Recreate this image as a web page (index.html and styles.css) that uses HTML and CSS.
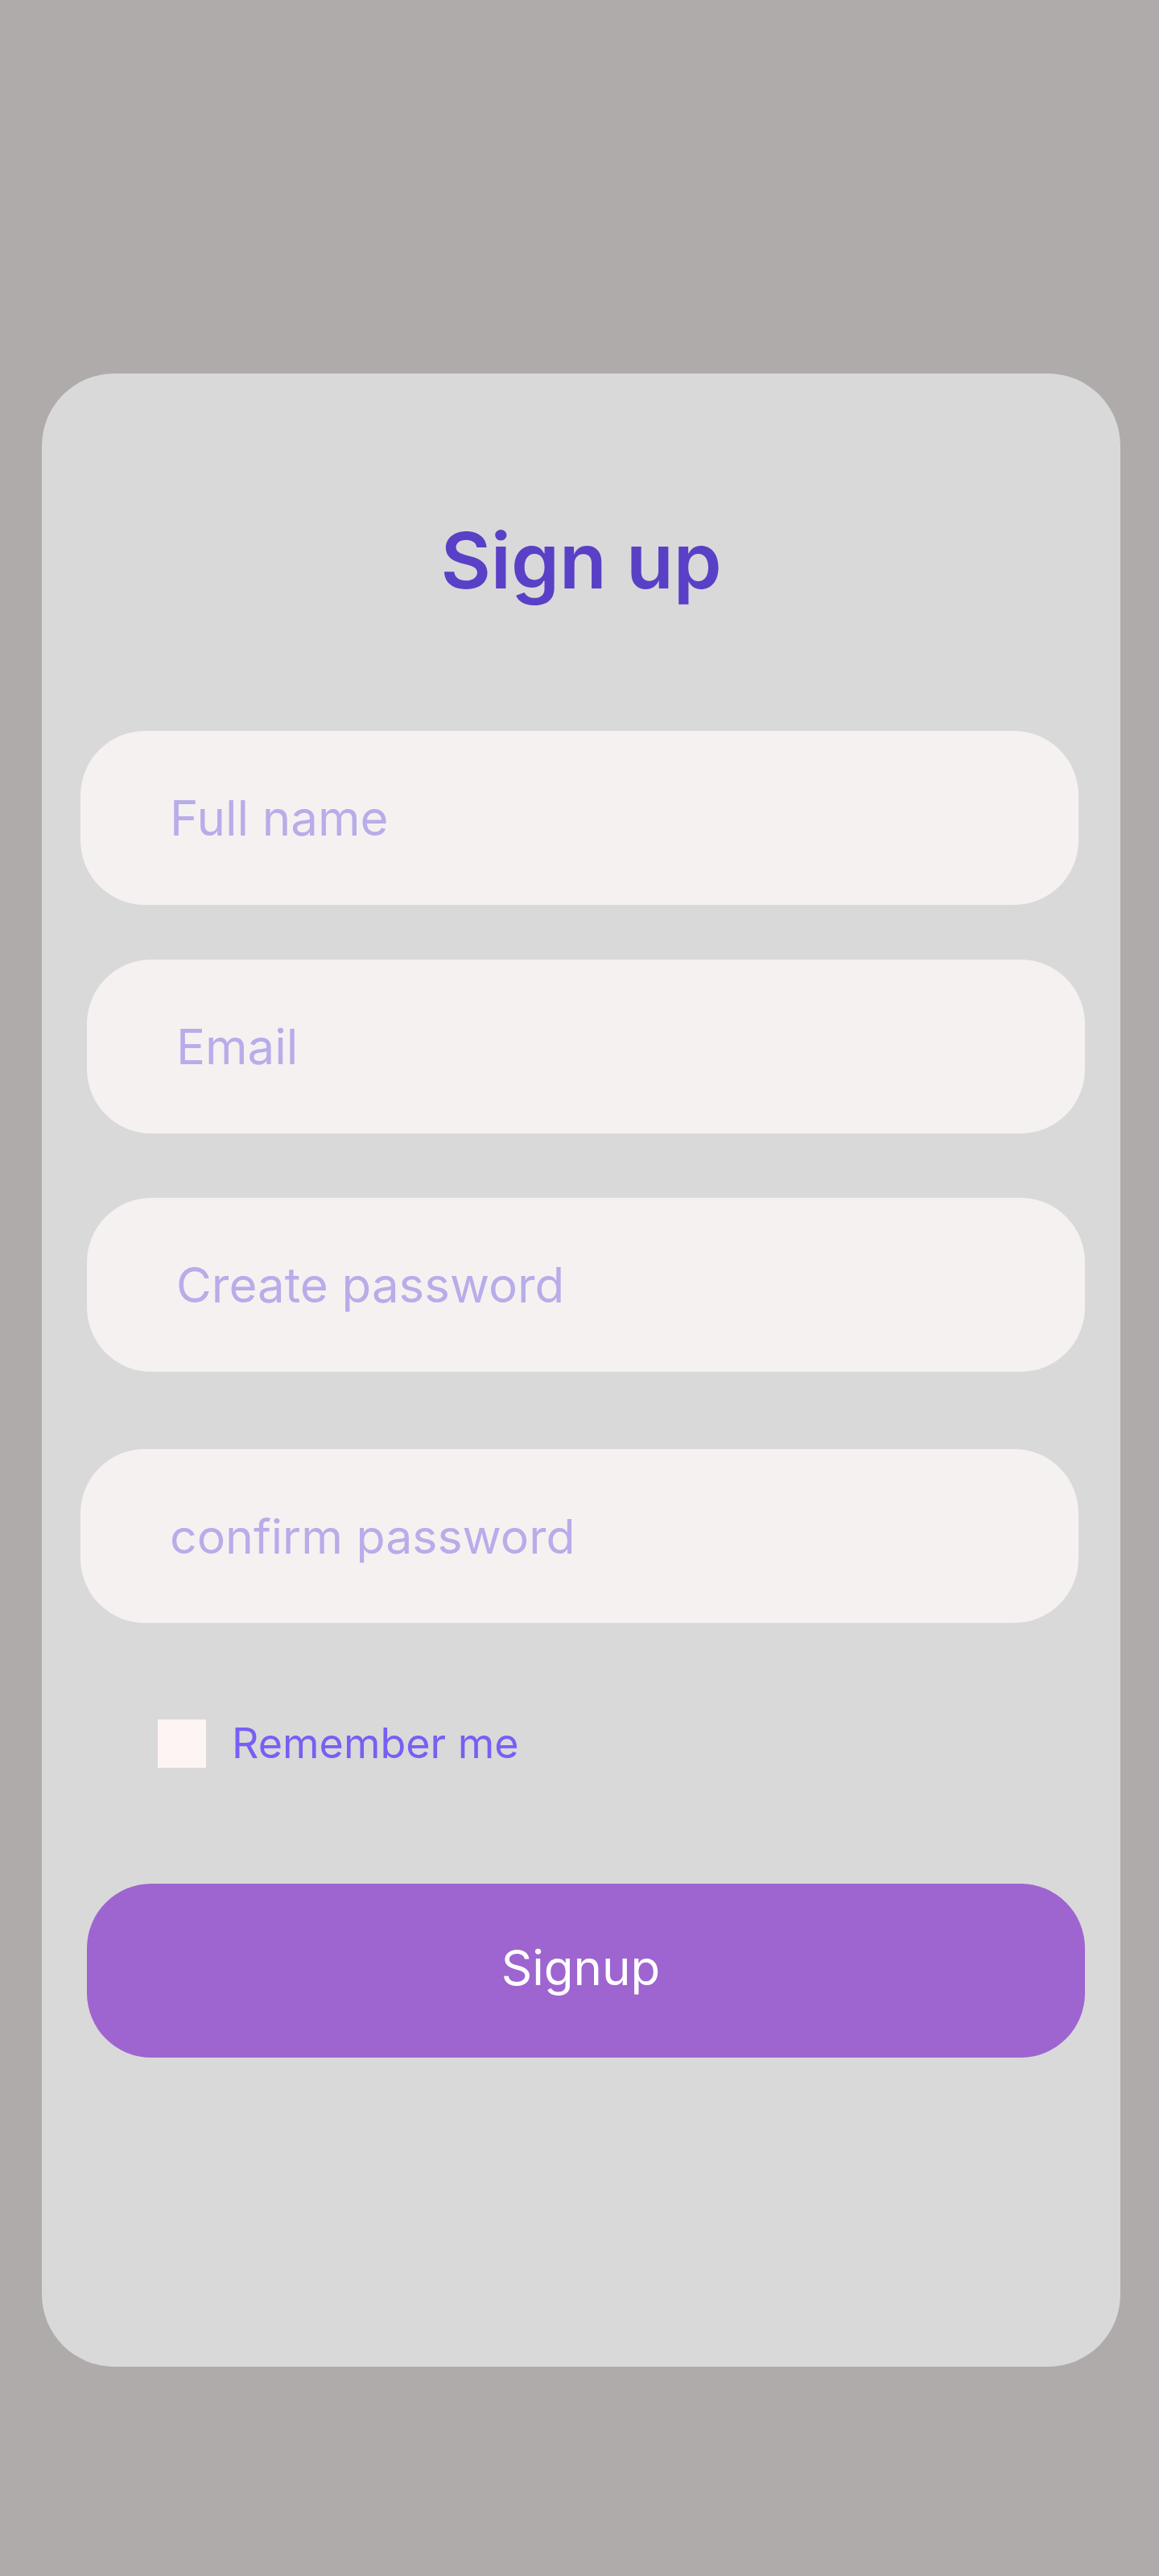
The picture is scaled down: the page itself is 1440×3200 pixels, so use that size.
FILE: index.html
```html
<!DOCTYPE html>
<html lang="en">
<head>
<meta charset="utf-8">
<title>Sign up</title>
<link rel="stylesheet" href="styles.css">
</head>
<body>
<main class="page">
  <form class="card">
    <h1 class="title">Sign up</h1>
    <input class="field field-a f1" type="text" placeholder="Full name">
    <input class="field field-b f2" type="email" placeholder="Email">
    <input class="field field-b f3" type="password" placeholder="Create password">
    <input class="field field-a f4" type="password" placeholder="confirm password">
    <label class="remember">
      <input class="check" type="checkbox">
      <span class="remember-text">Remember me</span>
    </label>
    <button class="submit" type="button">Signup</button>
  </form>
</main>
</body>
</html>
```
FILE: styles.css
```css
* { box-sizing: border-box; }
html, body {
  margin: 0;
  padding: 0;
  background: #b0abab;
  font-family: "Inter", "Noto Sans", sans-serif;
}
.page {
  width: 1440px;
  height: 3200px;
  padding-top: 464px;
  padding-left: 52px;
}
.card {
  width: 1340px;
  height: 2476px;
  background: #d9d9d9;
  border-radius: 90px;
  padding-top: 172px;
  display: flex;
  flex-direction: column;
  align-items: flex-start;
}
.title {
  margin: 0 0 1px 0;
  align-self: stretch;
  text-align: center;
  font-size: 96px;
  line-height: 120px;
  font-weight: 600;
  color: #5940c6;
}
.field {
  display: block;
  width: 1240px;
  height: 216px;
  border: none;
  outline: none;
  border-radius: 80px;
  background: #f6f1f1;
  padding: 0 0 0 111px;
  font-family: "Inter", "Noto Sans", sans-serif;
  font-size: 60px;
  color: #5940c6;
}
.field::placeholder { color: #b8ace9; opacity: 1; }
.field-a { margin-left: 48px; }
.field-b { margin-left: 56px; }
.f1 { margin-top: 151px; }
.f2 { margin-top: 68px; }
.f3 { margin-top: 80px; }
.f4 { margin-top: 96px; font-size: 59px; }
.remember {
  margin-top: 120px;
  margin-left: 144px;
  height: 60px;
  display: flex;
  align-items: center;
  gap: 32px;
}
.check {
  appearance: none;
  -webkit-appearance: none;
  margin: 0;
  width: 60px;
  height: 60px;
  background: #fdf4f4;
  border: none;
}
.remember-text {
  font-size: 52px;
  color: #775ff4;
  line-height: 60px;
}
.submit {
  margin-top: 144px;
  margin-left: 56px;
  width: 1240px;
  height: 216px;
  border: none;
  border-radius: 80px;
  background: #9e64cf;
  color: #ffffff;
  font-family: "Inter", "Noto Sans", sans-serif;
  font-size: 60px;
  font-weight: 400;
  padding: 0 13px 8px 0;
}
```
